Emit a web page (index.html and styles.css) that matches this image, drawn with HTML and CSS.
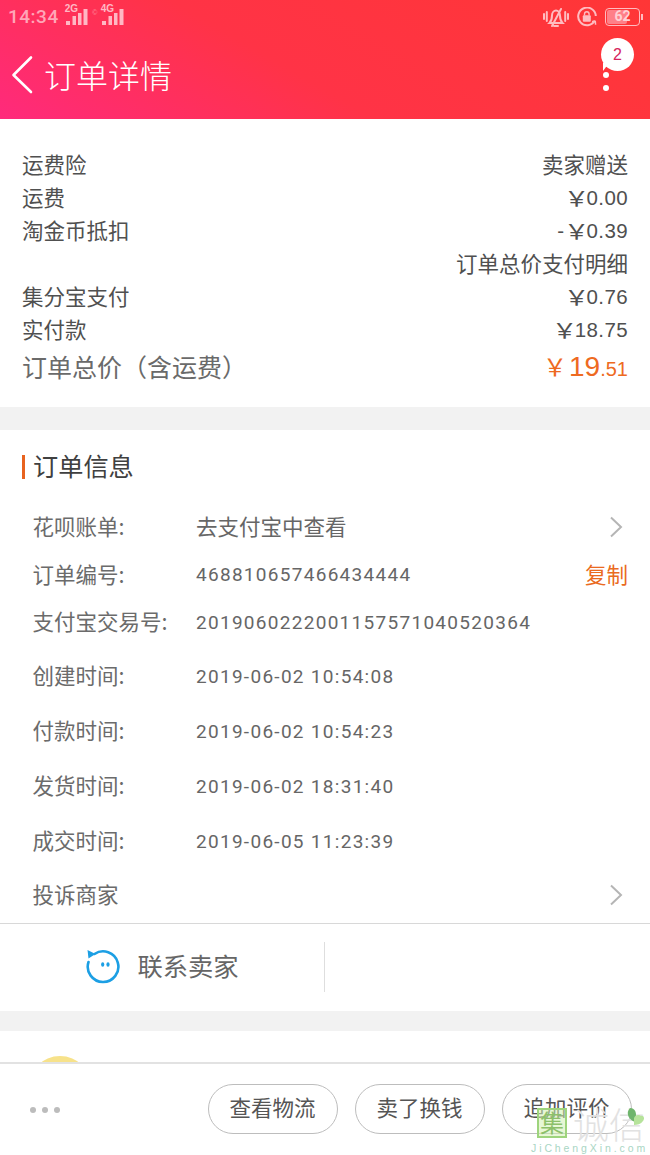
FILE: index.html
```html
<!DOCTYPE html>
<html lang="zh">
<head>
<meta charset="utf-8">
<title>订单详情</title>
<link rel="stylesheet" href="styles.css">
</head>
<body>
<div class="page">
  <header class="header">
    <div class="status">
      <div class="status-left">
        <span class="clock">14:34</span>
        <span class="net"><span class="net-label">2G</span><svg class="bars" width="23" height="17" viewBox="0 0 23 17"><rect x="1" y="12" width="4" height="4"/><rect x="7.500" y="7" width="3.500" height="9"/><rect x="13" y="4" width="3.500" height="12"/><rect x="18.500" y="0" width="4" height="16"/></svg></span>
        <span class="hd">©</span>
        <span class="net"><span class="net-label">4G</span><svg class="bars" width="23" height="17" viewBox="0 0 23 17"><rect x="1" y="12" width="4" height="4"/><rect x="7.500" y="7" width="3.500" height="9"/><rect x="13" y="4" width="3.500" height="12"/><rect x="18.500" y="0" width="4" height="16"/></svg></span>
      </div>
      <div class="status-right">
        <svg class="st-icon" width="26" height="22" viewBox="0 0 26 22" fill="none" stroke="#ffbcc0" stroke-width="2" stroke-linecap="round"><path d="M6.500 17h13c-2-2-2.500-4-2.500-7.500 0-3-2-5-4-5s-4 2-4 5C9 13 8.500 15 6.500 17z"/><path d="M11 20h4M18 3 9 20M1 8v5M3.800 6v9M22.200 6v9M25 8v5"/></svg>
        <svg class="st-icon" width="20" height="20" viewBox="0 0 20 20" fill="none" stroke="#ffbcc0" stroke-width="2"><path d="M17.800 13.500A8.800 8.800 0 1 1 18.800 9"/><path d="M15 14.500h3.300l.3 3.200" stroke-width="1.500"/><rect x="5.800" y="8.300" width="8" height="6.500" rx="1" fill="#ffbcc0" stroke="none"/><path d="M7.500 8.500V7a2.300 2.300 0 0 1 4.600 0v1.500" stroke-width="1.400"/></svg>
        <span class="battery"><span class="battery-fill"></span><span class="battery-num">62</span></span>
      </div>
    </div>
    <div class="nav">
      <div class="nav-left">
        <svg class="back" width="24" height="40" viewBox="0 0 24 40" fill="none" stroke="#fff" stroke-width="2.600" stroke-linecap="round" stroke-linejoin="round"><path d="M21 2.500 3.500 20 21 37"/></svg>
        <span class="nav-title">订单详情</span>
      </div>
      <div class="more">
        <span class="badge">2</span>
        <span class="dot"></span>
        <span class="dot"></span>
      </div>
    </div>
  </header>

  <section class="summary">
    <div class="row"><span>运费险</span><span>卖家赠送</span></div>
    <div class="row"><span>运费</span><span class="num"><span class="yen">￥</span>0.00</span></div>
    <div class="row"><span>淘金币抵扣</span><span class="num"><span class="minus">-</span><span class="yen">￥</span>0.39</span></div>
    <div class="row row-end"><span>订单总价支付明细</span></div>
    <div class="row"><span>集分宝支付</span><span class="num"><span class="yen">￥</span>0.76</span></div>
    <div class="row"><span>实付款</span><span class="num"><span class="yen">￥</span>18.75</span></div>
    <div class="row total"><span>订单总价（含运费）</span><span class="price"><span class="yen-big">￥</span><b>19</b><i>.51</i></span></div>
  </section>

  <section class="info">
    <h2 class="info-title">订单信息</h2>
    <div class="info-row r-first"><span class="key">花呗账单:</span><span class="val cjk">去支付宝中查看</span><svg class="chev" width="14" height="22" viewBox="0 0 14 22" fill="none" stroke="#b5b5b5" stroke-width="2"><path d="M2 1.500 12 11 2 20.500"/></svg></div>
    <div class="info-row r-second"><span class="key">订单编号:</span><span class="val">468810657466434444</span><span class="copy">复制</span></div>
    <div class="info-row r-third"><span class="key">支付宝交易号:</span><span class="val">2019060222001157571040520364</span></div>
    <div class="info-row r-time r-gap"><span class="key">创建时间:</span><span class="val">2019-06-02 10:54:08</span></div>
    <div class="info-row r-time"><span class="key">付款时间:</span><span class="val">2019-06-02 10:54:23</span></div>
    <div class="info-row r-time"><span class="key">发货时间:</span><span class="val">2019-06-02 18:31:40</span></div>
    <div class="info-row r-time"><span class="key">成交时间:</span><span class="val">2019-06-05 11:23:39</span></div>
    <div class="info-row r-time r-last"><span class="key">投诉商家</span><svg class="chev" width="14" height="22" viewBox="0 0 14 22" fill="none" stroke="#b5b5b5" stroke-width="2"><path d="M2 1.500 12 11 2 20.500"/></svg></div>
    <div class="contact">
      <div class="contact-cell">
        <svg width="36" height="36" viewBox="0 0 36 36" fill="none"><path d="M9.500 5A15.300 15.300 0 1 1 3.500 13" stroke="#1c9fe4" stroke-width="2.600" stroke-linecap="round"/><path d="M2.500 1 10.500 5 3.500 9.500z" fill="#1c9fe4"/><ellipse cx="17.700" cy="15.500" rx="1.600" ry="2.300" fill="#1c9fe4"/><ellipse cx="23" cy="15.500" rx="1.600" ry="2.300" fill="#1c9fe4"/></svg>
        <span class="contact-text">联系卖家</span>
      </div>
      <div class="contact-cell contact-empty"></div>
    </div>
  </section>

  <section class="next">
    <div class="avatar"></div>
  </section>

  <footer class="bar">
    <div class="dots"><span></span><span></span><span></span></div>
    <div class="actions">
      <span class="btn">查看物流</span>
      <span class="btn">卖了换钱</span>
      <span class="btn">追加评价</span>
    </div>
  </footer>

  <div class="watermark">
    <div class="wm-top">
      <span class="wm-seal">集</span>
      <span class="wm-name">诚信</span>
      <svg class="wm-leaf" width="22" height="22" viewBox="0 0 22 22"><path d="M6 1c4 0 6 3 6 7l-1 7C5 13 1 6 6 1z" fill="#6fb56c"/><path d="M10 11c1-3 5-4 7-2 3-1 4 3 2 5-2 3-6 4-9 4z" fill="#b6e39b"/></svg>
    </div>
    <div class="wm-url">JiChengXin.com</div>
  </div>
</div>
</body>
</html>
```

FILE: styles.css
```css
* { box-sizing: border-box; }
html, body { margin: 0; padding: 0; background: #fff; }
body { font-family: "Liberation Sans", "Noto Sans CJK SC", sans-serif; color: #555; }
.page { position: relative; width: 650px; height: 1155px; overflow: hidden; background: #f2f2f2; }

.header { height: 119px; background: linear-gradient(30deg, #ff2a7c 0%, #ff3346 44%, #ff3636 100%); }
.status { height: 33px; display: flex; justify-content: space-between; align-items: center; padding: 0 10px 0 8px; }
.status-left { display: flex; align-items: center; }
.clock { font-family: "Roboto", sans-serif; font-size: 19px; font-weight: 500; color: #ffa6b8; letter-spacing: .5px; margin-right: 6px; }
.net { position: relative; display: block; width: 24px; height: 22px; }
.hd { width: 12px; font-size: 7px; line-height: 10px; height: 18px; text-align: center; color: #ff8f9e; }
.net-label { position: absolute; left: 0; top: -3px; font-size: 10px; line-height: 11px; font-weight: 700; color: #ffb8c4; }
.bars { position: absolute; left: 0; top: 3px; fill: #ffb8c4; }
.status-right { display: flex; align-items: center; gap: 8px; }
.st-icon { display: block; }
.battery { position: relative; display: block; width: 35px; height: 18px; border: 1.500px solid #ffbcc0; border-radius: 4px; }
.battery::after { content: ""; position: absolute; right: -4px; top: 5px; width: 2px; height: 6px; background: #ffbcc0; }
.battery-fill { position: absolute; left: 1px; top: 1px; bottom: 1px; width: 60%; background: #ff8088; border-radius: 2px; }
.battery-num { position: relative; display: block; text-align: center; font-family: "Roboto", sans-serif; font-size: 14px; font-weight: 700; line-height: 15px; color: #ffd0d4; }

.nav { height: 86px; display: flex; justify-content: space-between; align-items: flex-start; }
.nav-left { display: flex; align-items: center; padding: 21px 0 0 10px; }
.back { display: block; }
.nav-title { margin-left: 10px; padding-bottom: 2px; font-family: "Noto Sans CJK SC", sans-serif; font-weight: 300; font-size: 32px; line-height: 40px; color: #fff; }
.more { position: relative; display: flex; flex-direction: column; gap: 7px; width: 6px; margin-right: 41px; padding-top: 39px; }
.badge { position: absolute; left: -2px; top: 5px; width: 33px; height: 33px; border-radius: 50%; background: #fff; color: #d6245c; font-size: 16px; line-height: 33px; text-align: center; }
.badge::after { content: ""; position: absolute; left: 2px; bottom: 0; width: 0; height: 0; border-top: 8px solid #fff; border-right: 6px solid transparent; }
.dot { width: 6px; height: 6px; flex: none; border-radius: 50%; background: #fff; }

.summary { height: 288px; padding: 28px 22px 0; background: #fff; }
.row { display: flex; justify-content: space-between; align-items: center; height: 33px; font-family: "Noto Sans CJK SC", sans-serif; font-size: 21.500px; line-height: 33px; color: #505050; }
.row-end { justify-content: flex-end; }
.num { display: flex; align-items: center; padding-top: 2px; font-family: "Liberation Sans", "Noto Sans CJK SC", sans-serif; font-size: 20.500px; letter-spacing: .4px; }
.yen { width: 21px; text-align: center; font-family: "Noto Sans CJK SC", sans-serif; font-size: 21px; font-weight: 400; letter-spacing: 0; transform: scaleX(1.2); }
.minus { margin-right: 1px; }
.total { height: 43px; font-size: 25px; color: #6a6a6a; }
.price { display: flex; align-items: baseline; padding-top: 3px; font-family: "Liberation Sans", "Noto Sans CJK SC", sans-serif; color: #ee6a21; font-size: 24px; }
.yen-big { margin-right: 2px; }
.price b { font-weight: 400; font-size: 28px; }
.price i { font-style: normal; font-size: 20px; }

.info { height: 581px; margin-top: 23px; background: #fff; position: relative; padding-top: 19px; }
.info-title { display: flex; align-items: center; gap: 8px; margin: 0 0 0 22px; height: 36px; padding-bottom: 4px; font-family: "Noto Sans CJK SC", sans-serif; font-size: 25.200px; font-weight: 400; line-height: 36px; color: #404040; }
.info-title::before { content: ""; width: 3px; height: 24px; margin-top: 4px; background: #e8631f; }
.info-row { display: flex; align-items: center; padding: 0 22px 0 32.500px; font-family: "Noto Sans CJK SC", sans-serif; font-size: 21.500px; color: #6b6b6b; }
.r-first { height: 47px; margin-top: 17px; }
.r-second { height: 48px; }
.r-third { height: 47px; }
.r-time { height: 55px; }
.r-gap { margin-top: 3px; }
.r-last { height: 53px; }
.key { width: 163.500px; flex: none; white-space: nowrap; }
.val { flex: 1; padding-top: 3px; font-family: "Roboto", sans-serif; font-size: 19px; letter-spacing: 1.290px; color: #666; white-space: nowrap; }
.val.cjk { padding-top: 0; font-family: "Noto Sans CJK SC", sans-serif; font-size: 21.500px; letter-spacing: 0; }
.copy { color: #ea6a20; }
.chev { display: block; margin-right: 5px; flex: none; }
.r-first .chev { margin-top: 3px; }
.r-time .chev { margin-left: auto; margin-top: 2px; }
.contact { position: absolute; left: 0; right: 0; top: 493px; height: 88px; padding-bottom: 2px; border-top: 1px solid #d8d8d8; display: flex; align-items: center; }
.contact-cell { width: 327px; height: 50px; display: flex; align-items: center; justify-content: center; gap: 16px; border-right: 1px solid #dedede; }
.contact-empty { border-right: 0; }
.contact-text { padding-bottom: 4px; font-family: "Noto Sans CJK SC", sans-serif; font-size: 25.300px; color: #666; }

.next { height: 40px; margin-top: 20px; background: #fff; overflow: hidden; padding: 25px 0 0 28px; }
.avatar { width: 64px; height: 64px; border-radius: 50%; background: #f7e28a; }

.bar { position: absolute; left: 0; right: 0; bottom: 0; height: 93px; background: #fff; border-top: 2px solid #e2e2e2; display: flex; align-items: center; justify-content: space-between; padding: 0 18px 0 30px; }
.dots { display: flex; gap: 6px; }
.dots span { width: 6px; height: 6px; border-radius: 50%; background: #bcbcbc; }
.actions { display: flex; gap: 17px; margin-top: -2px; }
.btn { width: 130px; height: 50px; padding: 0 1px 4px 0; border: 1px solid #bdbdbd; border-radius: 25px; display: flex; align-items: center; justify-content: center; font-family: "Noto Sans CJK SC", sans-serif; font-size: 21.500px; color: #555; }

.watermark { position: absolute; right: 0; bottom: 0; width: 120px; height: 47px; }
.wm-top { position: relative; height: 30px; display: flex; }
.wm-seal { width: 30px; height: 30px; margin-left: 7px; border: 2px solid #9ed47d; background: rgba(212, 240, 180, .55); color: #8cc06a; font-family: "Noto Sans CJK SC", sans-serif; font-size: 24px; line-height: 24px; text-align: center; }
.wm-name { margin-left: 6px; font-family: "Noto Sans CJK SC", sans-serif; font-size: 36px; line-height: 30px; font-weight: 300; color: #e2e2e2; }
.wm-leaf { position: absolute; right: 4px; top: -1px; }
.wm-url { font-size: 10.500px; letter-spacing: 2.900px; color: #a9d6c4; line-height: 14px; margin-top: 3px; margin-left: 1px; white-space: nowrap; }
```
